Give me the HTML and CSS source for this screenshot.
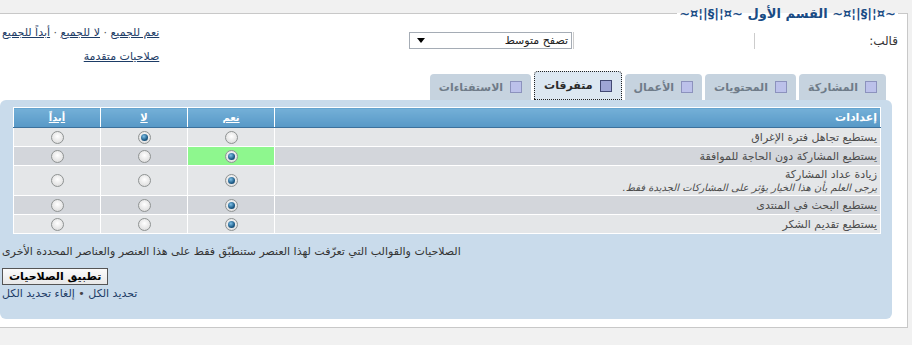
FILE: index.html
```html
<!DOCTYPE html>
<html dir="rtl">
	<head>
		<meta charset="utf-8">
		<title>الصلاحيات</title>
		<link rel="stylesheet" href="styles.css">
	</head>
	<body>
		<fieldset class="box">
			<legend>~¤¦|§|¦¤~ القسم الأول ~¤¦|§|¦¤~</legend>

			<div class="top">
				<div class="tpl-label">قالب:</div>
				<div class="tpl-select">
					<div class="select"><span>تصفح متوسط</span><i class="arrow"></i></div>
				</div>
				<div class="quick">
					<div class="line">
						<a href="#">نعم للجميع</a> <span class="dot">·</span>
						<a href="#">لا للجميع</a> <span class="dot">·</span>
						<a href="#">أبداً للجميع</a>
					</div>
					<div class="line second"><a href="#">صلاحيات متقدمة</a></div>
				</div>
			</div>

			<div class="tabs">
				<div class="tab"><i class="sq"></i>المشاركة</div>
				<div class="tab"><i class="sq"></i>المحتويات</div>
				<div class="tab"><i class="sq"></i>الأعمال</div>
				<div class="tab active"><i class="sq"></i>متفرقات</div>
				<div class="tab"><i class="sq"></i>الاستفتاءات</div>
			</div>

			<div class="panel">
				<table class="perms">
					<tr>
						<th class="name">إعدادات</th>
						<th class="col"><a href="#">نعم</a></th>
						<th class="col"><a href="#">لا</a></th>
						<th class="col"><a href="#">أبداً</a></th>
					</tr>
					<tr class="r1">
						<td class="name">يستطيع تجاهل فترة الإغراق</td>
						<td><i class="radio"></i></td>
						<td><i class="radio on"></i></td>
						<td><i class="radio"></i></td>
					</tr>
					<tr class="r2">
						<td class="name">يستطيع المشاركة دون الحاجة للموافقة</td>
						<td class="green"><i class="radio on"></i></td>
						<td><i class="radio"></i></td>
						<td><i class="radio"></i></td>
					</tr>
					<tr class="r1">
						<td class="name tall">زيادة عداد المشاركة<br><em>يرجى العلم بأن هذا الخيار يؤثر على المشاركات الجديدة فقط.</em></td>
						<td><i class="radio on"></i></td>
						<td><i class="radio"></i></td>
						<td><i class="radio"></i></td>
					</tr>
					<tr class="r2">
						<td class="name">يستطيع البحث في المنتدى</td>
						<td><i class="radio on"></i></td>
						<td><i class="radio"></i></td>
						<td><i class="radio"></i></td>
					</tr>
					<tr class="r1">
						<td class="name">يستطيع تقديم الشكر</td>
						<td><i class="radio on"></i></td>
						<td><i class="radio"></i></td>
						<td><i class="radio"></i></td>
					</tr>
				</table>

				<div class="foot">
					<p class="note">الصلاحيات والقوالب التي تعرّفت لهذا العنصر ستنطبّق فقط على هذا العنصر والعناصر المحددة الأخرى</p>
					<button class="apply">تطبيق الصلاحيات</button>
					<div class="sel"><a href="#">تحديد الكل</a> • <a href="#">إلغاء تحديد الكل</a></div>
				</div>
			</div>
		</fieldset>
	</body>
</html>
```

FILE: styles.css
```css
*{
	margin: 0;padding: 0;
}
body{
	background: #f1f1f1;
	font-family: "DejaVu Sans", sans-serif;
	font-size: 11px;
	color: #444;
	direction: rtl;
}
a{
	color: #1d3c66;
}
.box{
	margin: 6px 4px 0 0;
	background: #fff;
	border: 1px solid #c8c8c8;
	border-left: 0;
	padding: 0 9px 8px 0;
	min-width: 0;
}
.box legend{
	font-size: 13px;
	font-weight: bold;
	color: #1a4c85;
	padding: 0 2px;
	line-height: 15px;
}

/* template row */
.top{
	display: flex;
	align-items: flex-start;
	height: 50px;
}
.tpl-label{
	width: 143px;
	height: 16px;
	line-height: 16px;
	margin-top: 12px;
	border-left: 1px solid #ccc;
	font-size: 12px;
	color: #333;
}
.tpl-select{
	margin-top: 11px;
	margin-right: 180px;
	border-right: 1px solid #ccc;
	height: 17px;
	padding-right: 1px;
}
.select{
	width: 155px;
	height: 15px;
	border: 1px solid #a5acb5;
	display: flex;
	align-items: center;
	justify-content: space-between;
	padding: 0 3px;
	font-size: 11px;
	color: #222;
}
.arrow{
	width: 0;
	height: 0;
	border-left: 4px solid transparent;
	border-right: 4px solid transparent;
	border-top: 5px solid #000;
	margin-left: 4px;
}
.quick{
	margin-right: auto;
	margin-top: 5px;
	padding-left: 2px;
	text-align: left;
}
.quick .line{
	line-height: 14px;
	font-size: 11px;
}
.quick .line.second{
	margin-top: 10px;
	text-align: right;
}
.dot{
	color: #555;
}

/* tabs */
.tabs{
	display: flex;
	align-items: flex-end;
	gap: 3px;
	padding-right: 12px;
	height: 29px;
}
.tab{
	height: 26px;
	display: flex;
	align-items: center;
	gap: 7px;
	padding: 0 9px;
	background: #c6d3df;
	border-radius: 4px 4px 0 0;
	font-size: 11px;
	font-weight: bold;
	color: #6f7b88;
	box-sizing: border-box;
}
.tab.active{
	height: 29px;
	background: #dce7f1;
	border: 1px dotted #222;
	color: #2b2b2b;
}
.sq{
	width: 12px;
	height: 12px;
	box-sizing: border-box;
	border: 1px solid #8c92bd;
	background: #bcc1ea;
}
.tab.active .sq{
	border-color: #434a74;
	background: #9fa6d6;
}

/* panel */
.panel{
	background: #c9dbeb;
	border-radius: 6px;
	margin-right: 6px;
	padding: 7px 11px 18px 13px;
}
.perms{
	width: 100%;
	border-collapse: collapse;
	border-top: 1px solid #fff;
}
.perms th, .perms td{
	border: 1px solid #fff;
	border-top: 0;
}
.perms th{
	height: 19px;
	background: linear-gradient(#74b0d8, #5798c6);
	border-bottom: 1px solid #3c719c;
	color: #fff;
	font-weight: bold;
	font-size: 11px;
}
.perms th.name{
	text-align: right;
	padding-right: 3px;
}
.perms th a{
	color: #fff;
	font-size: 10px;
}
.perms .col{
	width: 86px;
}
.perms td{
	height: 18px;
	text-align: center;
	vertical-align: middle;
}
.perms td.name{
	text-align: right;
	padding-right: 3px;
	color: #4c4c4c;
}
.perms td.tall{
	height: 29px;
	line-height: 13px;
}
.perms em{
	font-size: 10px;
}
.r1 td{
	background: #e4e6e8;
}
.r2 td{
	background: #d3d6db;
}
.r2 td.green{
	background: #8ef78e;
}
.radio{
	display: inline-block;
	width: 11px;
	height: 11px;
	border-radius: 50%;
	border: 1px solid #8f9393;
	background: radial-gradient(circle at 50% 40%, #fff, #e2e2e2 70%, #cfcfcf);
	vertical-align: middle;
	position: relative;
}
.radio.on::after{
	content: "";
	position: absolute;
	left: 2px;
	top: 2px;
	width: 7px;
	height: 7px;
	border-radius: 50%;
	background: radial-gradient(circle at 40% 35%, #7fc1e8, #1c5a86 60%, #0d3352);
}

/* footer */
.foot{
	text-align: left;
	padding-left: 2px;
	margin-left: -13px;
}
.note{
	margin-top: 11px;
	font-size: 11px;
	color: #333;
	line-height: 14px;
}
.apply{
	margin-top: 9px;
	font-family: "DejaVu Sans", sans-serif;
	font-size: 11px;
	font-weight: bold;
	color: #000;
	height: 17px;
	padding: 0 6px;
	background: linear-gradient(#fbfbfb, #e8e8e8);
	border: 1px solid #555;
}
.sel{
	margin-top: 2px;
	line-height: 14px;
}
.sel a{
	text-decoration: none;
}
```
